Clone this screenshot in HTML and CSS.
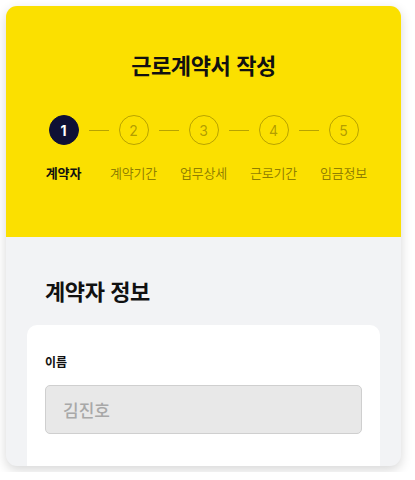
FILE: index.html
```html
<!DOCTYPE html>
<html lang="ko">
<head>
<meta charset="utf-8">
<title>근로계약서 작성</title>
<link rel="stylesheet" href="styles.css">
</head>
<body>
<div class="card">
  <header class="hero">
    <h1 class="hero-title">근로계약서 작성</h1>
    <div class="steps">
      <div class="step active">
        <span class="step-num">1</span>
        <span class="step-label">계약자</span>
      </div>
      <span class="step-line"></span>
      <div class="step">
        <span class="step-num">2</span>
        <span class="step-label">계약기간</span>
      </div>
      <span class="step-line"></span>
      <div class="step">
        <span class="step-num">3</span>
        <span class="step-label">업무상세</span>
      </div>
      <span class="step-line"></span>
      <div class="step">
        <span class="step-num">4</span>
        <span class="step-label">근로기간</span>
      </div>
      <span class="step-line"></span>
      <div class="step">
        <span class="step-num">5</span>
        <span class="step-label">임금정보</span>
      </div>
    </div>
  </header>
  <section class="body">
    <h2 class="section-title">계약자 정보</h2>
    <div class="form-card">
      <label class="field-label">이름</label>
      <div class="input">김진호</div>
    </div>
  </section>
</div>
</body>
</html>
```
FILE: styles.css
```css
* { box-sizing: border-box; }
html, body { margin: 0; padding: 0; background: #ffffff; }
body {
  font-family: "Noto Sans CJK KR", "Noto Sans", sans-serif;
  padding: 6px;
}
.card {
  width: 395px;
  height: 460px;
  border-radius: 11px;
  overflow: hidden;
  background: #f2f3f5;
  box-shadow: 0 4px 12px rgba(0, 0, 0, 0.16);
  display: flex;
  flex-direction: column;
}
.hero {
  background: #fbe000;
  height: 231px;
  flex: none;
  padding-top: 43px;
  display: flex;
  flex-direction: column;
  align-items: center;
}
.hero-title {
  margin: 0;
  font-size: 22px;
  line-height: 30px;
  font-weight: 700;
  color: #111111;
  letter-spacing: -0.4px;
}
.steps {
  margin-top: 36px;
  display: flex;
  align-items: flex-start;
}
.step {
  width: 30px;
  display: flex;
  flex-direction: column;
  align-items: center;
}
.step-num {
  width: 30px;
  height: 30px;
  border-radius: 50%;
  border: 1px solid rgba(60, 50, 0, 0.35);
  display: flex;
  align-items: center;
  justify-content: center;
  font-family: "Inter", "Noto Sans", sans-serif;
  font-size: 14px;
  color: rgba(60, 50, 0, 0.4);
}
.step.active .step-num {
  background: #0f1035;
  border-color: #0f1035;
  color: #ffffff;
  font-weight: 700;
}
.step-label {
  margin-top: 19px;
  white-space: nowrap;
  font-size: 13px;
  line-height: 18px;
  color: rgba(50, 42, 0, 0.55);
  letter-spacing: -0.2px;
}
.step.active .step-label {
  color: #111111;
  font-weight: 700;
}
.step-line {
  width: 20px;
  height: 1px;
  margin: 15px 10px 0;
  background: rgba(60, 50, 0, 0.35);
}
.body {
  flex: 1;
  padding: 38px 21px 0;
}
.section-title {
  margin: 0 0 0 18px;
  font-size: 22px;
  line-height: 30px;
  font-weight: 700;
  color: #111111;
  letter-spacing: -0.4px;
}
.form-card {
  margin-top: 20px;
  background: #ffffff;
  border-radius: 10px;
  padding: 28px 18px 40px;
  height: 200px;
}
.field-label {
  display: block;
  font-size: 12px;
  line-height: 18px;
  font-weight: 700;
  color: #111111;
}
.input {
  margin-top: 14px;
  height: 49px;
  border: 1px solid #cfcfcf;
  border-radius: 5px;
  background: #e8e8e8;
  padding: 0 17px;
  display: flex;
  align-items: center;
  font-size: 17px;
  font-weight: 500;
  color: #a8a8a8;
}
```
